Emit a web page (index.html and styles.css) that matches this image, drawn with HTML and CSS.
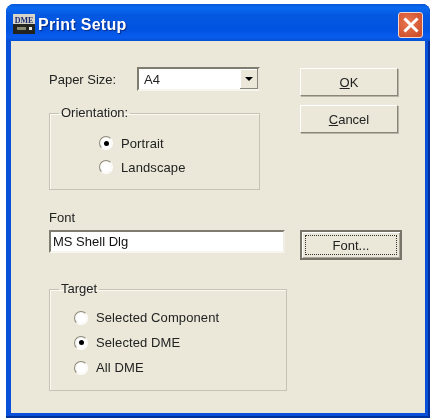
FILE: index.html
```html
<!DOCTYPE html>
<html>
<head>
  <title>Print Setup</title>
  <link rel="stylesheet" href="styles.css">
</head>
<body>
  <div class="window">
    <div class="titlebar">
      <svg class="app-icon" width="22" height="20" viewBox="0 0 22 20">
        <rect x="0" y="0" width="22" height="20" fill="#d8d4c8"/>
        <rect x="0" y="10" width="22" height="10" fill="#23231f"/>
        <rect x="4" y="13" width="9" height="3" fill="#8a8a70"/>
        <rect x="16" y="13" width="3" height="3" fill="#e8e8e0"/>
        <text x="11" y="8.5" text-anchor="middle" class="icon-text">DME</text>
      </svg>
      <span class="title">Print Setup</span>
      <div class="close">
        <svg width="16" height="16" viewBox="0 0 16 16">
          <path d="M2.5 2.5L13.5 13.5M13.5 2.5L2.5 13.5" stroke="#fff" stroke-width="3" stroke-linecap="square"/>
        </svg>
      </div>
    </div>
    <div class="client">
      <div class="top-row">
        <div class="left-col">
          <div class="paper-row">
            <label class="paper-label">Paper Size:</label>
            <div class="combo">
              <span class="combo-value">A4</span>
              <span class="combo-btn"><span class="arrow"></span></span>
            </div>
          </div>
          <fieldset class="group orientation">
            <legend>Orientation:</legend>
            <div class="radio-list">
              <div class="radio-row"><span class="radio checked"></span>Portrait</div>
              <div class="radio-row"><span class="radio"></span>Landscape</div>
            </div>
          </fieldset>
        </div>
        <div class="buttons">
          <button class="btn"><u>O</u>K</button>
          <button class="btn"><u>C</u>ancel</button>
        </div>
      </div>
      <div class="font-label">Font</div>
      <div class="font-row">
        <div class="textbox">MS Shell Dlg</div>
        <button class="btn btn-default"><span class="focus">Font...</span></button>
      </div>
      <fieldset class="group target">
        <legend>Target</legend>
        <div class="radio-list">
          <div class="radio-row"><span class="radio"></span>Selected Component</div>
          <div class="radio-row"><span class="radio checked"></span>Selected DME</div>
          <div class="radio-row"><span class="radio"></span>All DME</div>
        </div>
      </fieldset>
    </div>
  </div>
</body>
</html>
```

FILE: styles.css
```css
html, body {
  margin: 0;
  padding: 0;
  background: #fff;
}
body {
  width: 434px;
  height: 420px;
  overflow: hidden;
  font-family: "Liberation Sans", Arial, sans-serif;
  font-size: 13px;
  color: #222;
}
.window {
  width: 424px;
  height: 414px;
  margin: 4px 0 0 6px;
  display: flex;
  flex-direction: column;
  background: #0a4fd8;
  border-radius: 8px 8px 0 0;
  box-shadow: inset 0 -2px 0 #00309c, inset -2px 0 0 #00309c;
  filter: blur(0.35px);
}
.titlebar {
  height: 37px;
  box-sizing: border-box;
  flex: none;
  display: flex;
  align-items: center;
  padding: 5px 7px 0 7px;
  border-radius: 8px 8px 0 0;
  background: linear-gradient(#0a58d8 0, #0a6af0 10%, #0458e0 30%, #0053e0 70%, #0a5cf0 90%, #0450d0 100%);
}
.app-icon {
  flex: none;
  margin-top: -3px;
}
.icon-text {
  font-family: "Liberation Serif", serif;
  font-size: 8px;
  font-weight: bold;
  fill: #1a2a70;
}
.title {
  margin-left: 3px;
  color: #fff;
  font-size: 16px;
  font-weight: bold;
  letter-spacing: 0.3px;
  text-shadow: 1px 1px 1px #0a2a80;
}
.close {
  margin-left: auto;
  margin-top: -1px;
  width: 23px;
  height: 24px;
  display: flex;
  align-items: center;
  justify-content: center;
  border: 1px solid #f0d8d0;
  border-radius: 3px;
  background: radial-gradient(circle at 40% 40%, #e87850, #d0502c 80%);
}
.client {
  flex: 1;
  margin: 0 5px 5px 5px;
  padding: 26px 0 0 38px;
  background: #ebe8d9;
}
.top-row {
  display: flex;
  align-items: flex-start;
}
.left-col {
  width: 211px;
}
.paper-row {
  display: flex;
  align-items: center;
  height: 24px;
}
.paper-label {
  width: 88px;
}
.combo {
  flex: 1;
  height: 24px;
  box-sizing: border-box;
  display: flex;
  align-items: center;
  background: #fff;
  border: 2px solid;
  border-color: #7f7c70 #e8e6da #f6f5ee #7f7c70;
}
.combo-value {
  flex: 1;
  padding-left: 5px;
}
.combo-btn {
  width: 18px;
  height: 20px;
  display: flex;
  align-items: center;
  justify-content: center;
  background: #ebe8d9;
  box-shadow: inset -1px -1px 0 #8a877a, inset 1px 1px 0 #fff;
}
.arrow {
  width: 0;
  height: 0;
  border-left: 4px solid transparent;
  border-right: 4px solid transparent;
  border-top: 4px solid #000;
}
.group {
  margin: 0;
  padding: 0;
  box-sizing: border-box;
  border: 1px solid #c6c3b2;
  box-shadow: 1px 1px 0 #fbfaf4 inset;
}
.group legend {
  margin-left: 9px;
  padding: 0 2px;
  height: 16px;
  line-height: 16px;
}
.orientation {
  margin-top: 14px;
  height: 85px;
}
.orientation .radio-list {
  padding: 10px 0 0 49px;
}
.radio-row {
  display: flex;
  align-items: center;
  height: 24px;
  letter-spacing: 0.1px;
}
.radio {
  flex: none;
  position: relative;
  width: 14px;
  height: 14px;
  box-sizing: border-box;
  margin-right: 8px;
  border-radius: 50%;
  border: 1px solid;
  border-color: #8d8a7c #fff #fff #8d8a7c;
  background: radial-gradient(circle, #fff 50%, #ece9de);
}
.radio.checked::after {
  content: "";
  position: absolute;
  left: 3.5px;
  top: 3.5px;
  width: 5px;
  height: 5px;
  border-radius: 50%;
  background: #000;
}
.buttons {
  margin: 1px 0 0 40px;
  display: flex;
  flex-direction: column;
  gap: 9px;
}
.btn {
  width: 98px;
  height: 28px;
  padding: 0;
  font: inherit;
  color: #222;
  background: #ebe8d9;
  border: 1px solid;
  border-color: #fff #8a877a #8a877a #fff;
  box-shadow: 1px 1px 0 #b8b5a6;
}
.font-label {
  margin-top: 20px;
  height: 20px;
}
.font-row {
  display: flex;
  align-items: flex-start;
  gap: 15px;
}
.textbox {
  width: 236px;
  height: 23px;
  box-sizing: border-box;
  padding-left: 2px;
  line-height: 20px;
  color: #111;
  background: #fff;
  border: 2px solid;
  border-color: #7f7c70 #f0eee4 #f6f5ee #7f7c70;
}
.btn-default {
  width: 102px;
  height: 30px;
  border: 2px solid;
  border-color: #77746a;
  box-shadow: inset 1px 1px 0 #fff, inset -1px -1px 0 #aaa79a;
  display: flex;
  padding: 3px;
}
.focus {
  flex: 1;
  align-self: stretch;
  display: flex;
  align-items: center;
  justify-content: center;
  border: 1px dotted #333;
}
.target {
  width: 238px;
  height: 110px;
  margin-top: 21px;
}
.target .radio-list {
  padding: 8px 0 0 24px;
}
.target .radio-row {
  height: 25px;
}
```
